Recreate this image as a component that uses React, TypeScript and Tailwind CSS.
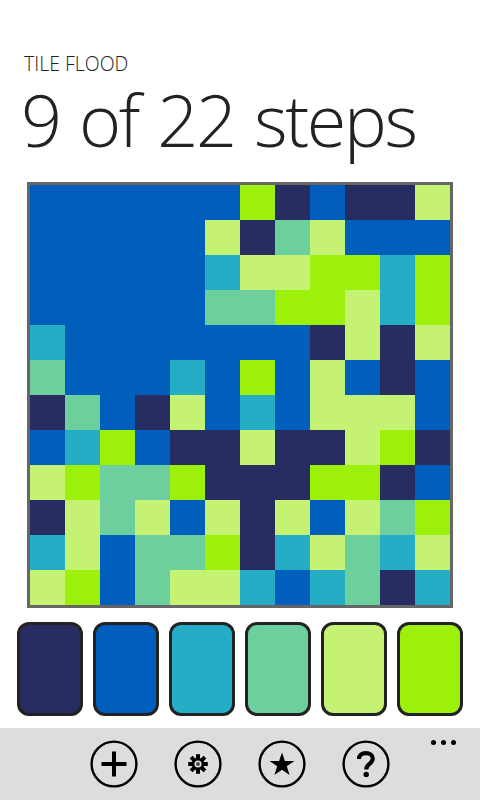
import React from "react";

const colors: Record<string, string> = {
  D: "bg-[#272d61]",
  B: "bg-[#005fbc]",
  C: "bg-[#25adc6]",
  G: "bg-[#6dce9e]",
  L: "bg-[#c6f274]",
  Y: "bg-[#9df00a]",
};

const rows = [
  "BBBBBBYDBDDL",
  "BBBBBLDGLBBB",
  "BBBBBCLLYYCY",
  "BBBBBGGYYLCY",
  "CBBBBBBBDLDL",
  "GBBBCBYBLBDB",
  "DGBDLBCBLLLB",
  "BCYBDDLDDLYD",
  "LYGGYDDDYYDB",
  "DLGLBLDLBLGY",
  "CLBGGYDCLGCL",
  "LYBGLLCBCGDC",
];

function RoundIcon({ children }: { children: React.ReactNode }) {
  return (
    <button className="w-12 h-12">
      <svg viewBox="0 0 48 48" className="w-12 h-12 block">
        <circle cx="24" cy="24" r="22.4" fill="none" stroke="#000" strokeWidth="2.4" />
        {children}
      </svg>
    </button>
  );
}

export default function App() {
  return (
    <div className="w-[480px] h-[800px] bg-white flex flex-col font-['Open_Sans',sans-serif] overflow-hidden">
      <div className="h-[182px] pt-[52px] pl-6 text-[#222]">
        <h2 className="text-[19.5px] leading-6 font-light">TILE FLOOD</h2>
        <h1 className="text-[72px] leading-[86px] tracking-[-2.4px] [word-spacing:3px] font-light -ml-[3px] whitespace-nowrap">
          9 of 22 steps
        </h1>
      </div>

      <div className="ml-[27px] w-[426px] h-[426px] border-[3px] border-[#666666] grid grid-cols-12">
        {rows.flatMap((row, r) =>
          row.split("").map((c, i) => <div key={`${r}-${i}`} className={`h-[35px] ${colors[c]}`} />)
        )}
      </div>

      <div className="mt-[14px] px-[17px] flex gap-[10px]">
        {["D", "B", "C", "G", "L", "Y"].map((c) => (
          <button key={c} className={`w-[66px] h-[94px] rounded-[12px] border-[3px] border-[#222222] ${colors[c]}`} />
        ))}
      </div>

      <div className="relative mt-[12px] flex-1 bg-[#dddddd] flex items-start justify-center gap-9 pt-3">
        <RoundIcon>
          <path d="M24 11.5V36.5M11.5 24H36.5" stroke="#000" strokeWidth="4" fill="none" />
        </RoundIcon>
        <RoundIcon>
          <g transform="translate(24 24)">
            {[0, 45, 90, 135].map((a) => (
              <rect key={a} x="-2" y="-9.8" width="4" height="19.6" fill="#000" transform={`rotate(${a})`} />
            ))}
            <circle r="6.2" fill="#000" />
            <circle r="3.6" fill="#ddd" />
            <circle r="1.9" fill="#444" />
          </g>
        </RoundIcon>
        <RoundIcon>
          <polygon
            fill="#000"
            points="24,12.5 26.9,20.9 36.5,20.9 28.8,26.3 31.6,35 24,29.7 16.4,35 19.2,26.3 11.5,20.9 21.1,20.9"
          />
        </RoundIcon>
        <RoundIcon>
          <path
            d="M17 19C17 15 19.8 13.2 23.8 13.2C28 13.2 30.8 15.3 30.8 18.6C30.8 21.3 29.2 22.6 27.2 24.1C25.2 25.6 24.3 26.6 24.3 29.6"
            fill="none"
            stroke="#000"
            strokeWidth="4.2"
          />
          <circle cx="24.2" cy="34.4" r="2.7" fill="#000" />
        </RoundIcon>
        <div className="absolute top-3 right-6 flex gap-[5px]">
          <span className="w-[5px] h-[5px] rounded-full bg-black" />
          <span className="w-[5px] h-[5px] rounded-full bg-black" />
          <span className="w-[5px] h-[5px] rounded-full bg-black" />
        </div>
      </div>
    </div>
  );
}
